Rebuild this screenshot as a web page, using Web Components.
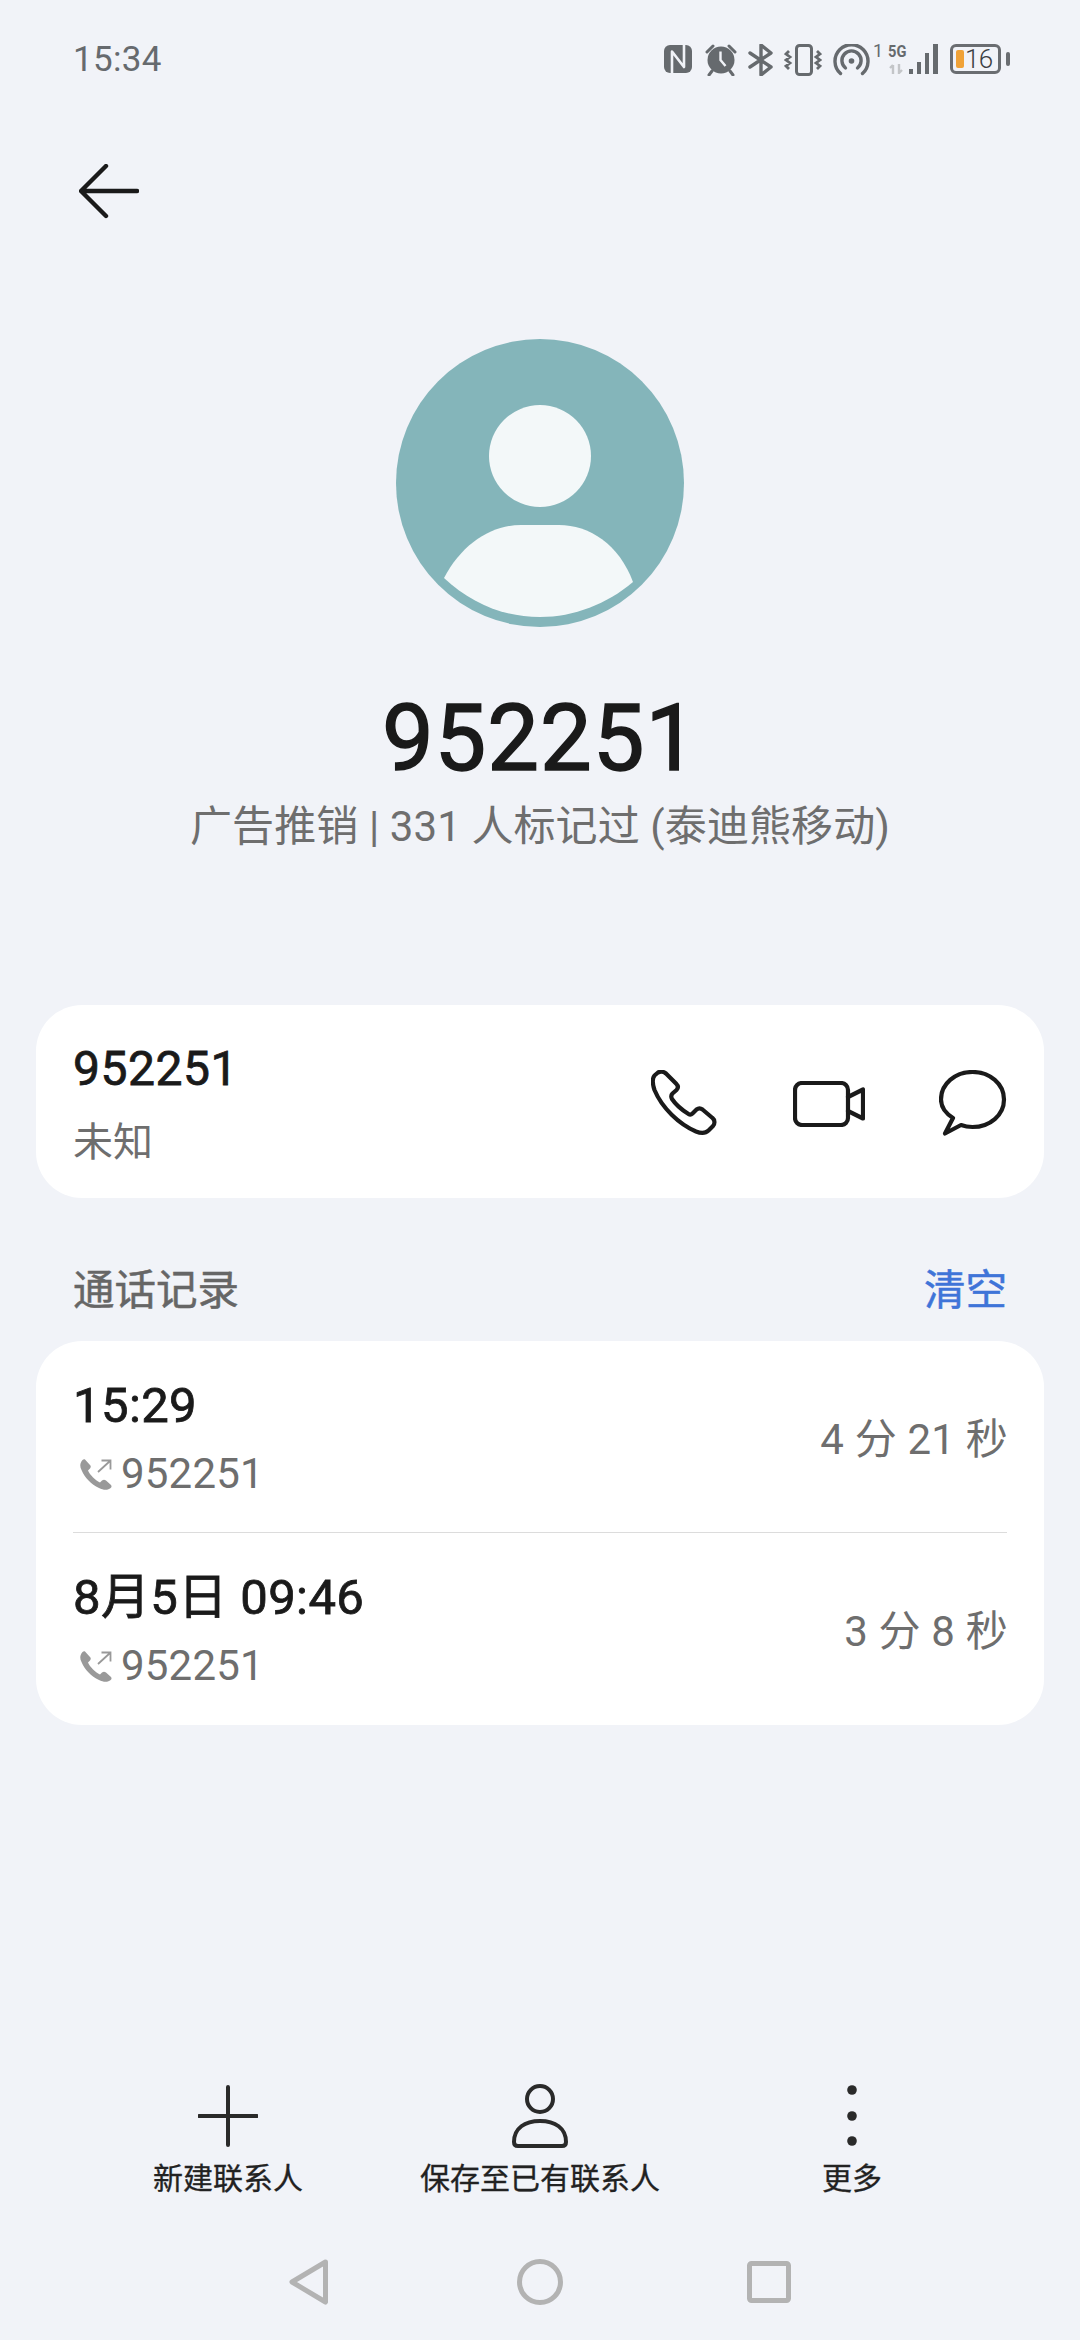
<!DOCTYPE html>
<html lang="zh"><head><meta charset="utf-8"><title>952251</title>
<style>
html,body{margin:0;padding:0;background:#f1f3f8}
body{font-family:Roboto,"Noto Sans CJK SC",sans-serif;width:1080px;height:2340px;overflow:hidden}
</style></head><body>
<contact-page>
  <status-bar slot="status"></status-bar>
  <back-row slot="back"></back-row>
  <profile-head slot="profile" number="952251" note="广告推销 | 331 人标记过 (泰迪熊移动)"></profile-head>
  <contact-card slot="contact" number="952251" label="未知"></contact-card>
  <section-head slot="section" title="通话记录" action="清空"></section-head>
  <call-card slot="calls">
    <call-row time="15:29" number="952251" dur="4 分 21 秒"></call-row>
    <call-row time="8月5日 09:46" number="952251" dur="3 分 8 秒" last></call-row>
  </call-card>
  <action-bar slot="actions"></action-bar>
  <nav-bar slot="nav"></nav-bar>
</contact-page>
<script>
function def(name, html){
  customElements.define(name, class extends HTMLElement{
    connectedCallback(){
      if(this.shadowRoot) return;
      const r=this.attachShadow({mode:'open'});
      r.innerHTML = typeof html==='function'? html(this): html;
    }
  });
}
const FONT='Roboto,"Noto Sans CJK SC",sans-serif';
def('contact-page',`<style>:host{display:flex;flex-direction:column;width:1080px;height:2340px;font-family:${FONT}}
.sp{flex:1}</style>
<slot name="status"></slot><slot name="back"></slot><slot name="profile"></slot><slot name="contact"></slot><slot name="section"></slot><slot name="calls"></slot><div class="sp"></div><slot name="actions"></slot><slot name="nav"></slot>`);

def('status-bar',`<style>:host{display:flex;align-items:flex-start;height:118px;box-sizing:border-box;padding:44px 70px 0 73px;color:#666a6e}
.t{font-size:35px;line-height:30px;letter-spacing:.3px;width:100px;padding-top:1px}
.ic{margin-left:auto;display:flex;align-items:flex-start;height:32px}
svg{display:block}
.one{font-size:18px;line-height:14px;width:18px;padding-left:3px;margin-top:0;box-sizing:border-box;color:#666a6e}
.g{display:flex;flex-direction:column;width:21px}
.g span{font-size:17px;line-height:14px;font-weight:700;display:block;height:20px;transform:scaleX(.86);transform-origin:top left;white-space:nowrap}
.bat{box-sizing:border-box;width:51px;height:30px;border:3px solid #6a6d71;border-radius:6px;display:flex;align-items:center;padding-left:3px;margin-left:12px}
.bat i{display:block;flex:none;width:8px;height:18px;background:#f0a237;border-radius:2px}
.bat b{font-weight:300;font-size:26px;line-height:24px;color:#3c3f43;margin-left:1px;letter-spacing:-.6px}
.nub{width:4px;height:14px;background:#6a6d71;border-radius:2px;margin:8px 0 0 5px}
</style>
<div class="t">15:34</div>
<div class="ic">
<svg width="28" height="30" viewBox="0 0 28 30" style="margin-top:1px"><rect width="28" height="28" rx="6" fill="#666a6e"/><path d="M8 28V6.500L20 22V0" fill="none" stroke="#f1f3f8" stroke-width="2.600" stroke-linejoin="round"/></svg>
<svg width="32" height="32" viewBox="0 0 32 32" style="margin-left:13px"><path d="M2 8l6-6M30 8l-6-6M7 27l-3 4M25 27l3 4" stroke="#666a6e" stroke-width="3" stroke-linecap="round"/><circle cx="16" cy="16" r="13.500" fill="#666a6e"/><path d="M15.500 7.500V16l5 6" stroke="#f1f3f8" stroke-width="2.400" fill="none"/></svg>
<svg width="26" height="32" viewBox="0 0 26 32" style="margin-left:11px"><path d="M2 9l21 14-10 8V1l10 8L2 23" fill="none" stroke="#666a6e" stroke-width="3.400" stroke-linejoin="round" stroke-linecap="round"/></svg>
<svg width="38" height="32" viewBox="0 0 38 32" style="margin-left:10px"><rect x="12.500" y="1.500" width="15" height="29" rx="3" fill="none" stroke="#666a6e" stroke-width="3"/><path d="M5 7L2 10l4 3-4 3 4 3-4 3 3 3M33 7l3 3-4 3 4 3-4 3 4 3-3 3" fill="none" stroke="#666a6e" stroke-width="2.800"/></svg>
<svg width="37" height="32" viewBox="0 0 37 32" style="margin-left:11px"><path d="M7.500 29.500A16.500 16.500 0 1 1 29.500 29.500" fill="none" stroke="#666a6e" stroke-width="3.400" stroke-linecap="round"/><path d="M12.500 24A9.600 9.600 0 1 1 24.500 24" fill="none" stroke="#666a6e" stroke-width="3.400" stroke-linecap="round"/><circle cx="18.500" cy="17" r="2.800" fill="#666a6e"/></svg>
<span class="one">1</span>
<div class="g"><span>5G</span><svg width="17" height="10" viewBox="0 0 17 10"><path d="M5 10V1M2 4l3-3M11 0v9l3-3" fill="none" stroke="#c3c5c8" stroke-width="2.400"/></svg></div>
<svg width="29" height="30" viewBox="0 0 29 30"><path d="M0 25h4v5H0zM8 18h4v12H8zM16 9h4v21h-4zM24 0h5v30h-5z" fill="#666a6e"/></svg>
<div class="bat"><i></i><b>16</b></div><div class="nub"></div>
</div>`);

def('back-row',`<style>:host{display:flex;align-items:center;height:147px;padding-left:79px}svg{display:block}</style>
<svg width="60" height="56" viewBox="0 0 60 56"><path d="M27 2L2 27l25 25M3 27h55" fill="none" stroke="#1a1a1a" stroke-width="4.400" stroke-linecap="round" stroke-linejoin="round"/></svg>`);

def('profile-head',h=>`<style>:host{display:flex;flex-direction:column;align-items:center;margin-top:74px;height:666px}
svg{display:block}
.n{font-size:92px;line-height:100px;font-weight:400;-webkit-text-stroke:1.500px #1a1a1a;color:#1a1a1a;margin-top:62px;letter-spacing:1px}
.s{font-size:42px;line-height:60px;color:#6e6e6e;margin-top:8px;letter-spacing:.1px}</style>
<svg width="288" height="288" viewBox="0 0 288 288"><circle cx="144" cy="144" r="144" fill="#84b5ba"/><circle cx="144" cy="117" r="51" fill="#f3f8f9"/><path d="M48 239C66 205 95 186 125 186H163C193 186 223 205 237 243C211 265 178 278 144 278C107 278 75 264 48 239Z" fill="#f3f8f9"/></svg>
<div class="n">${h.getAttribute('number')}</div><div class="s">${h.getAttribute('note')}</div>`);

def('contact-card',h=>`<style>:host{display:flex;align-items:flex-start;box-sizing:border-box;margin:0 36px;height:193px;background:#fff;border-radius:46px;padding:27px 37px 0 37px}
.t{flex:1}
.a{font-size:48px;line-height:73px;font-weight:400;-webkit-text-stroke:.8px #1a1a1a;color:#1a1a1a;letter-spacing:.5px}
.b{font-size:40px;line-height:73px;color:#6e6e6e;padding-top:1px}
svg{display:block;fill:none;stroke:#1a1a1a;stroke-width:4.200;stroke-linejoin:round;stroke-linecap:round}
.i{display:flex;margin-top:38px}</style>
<div class="t"><div class="a">${h.getAttribute('number')}</div><div class="b">${h.getAttribute('label')}</div></div>
<div class="i">
<svg width="66" height="66" viewBox="0 0 66 66"><path d="M7 2.500C10 1 12.500 1.500 15 3.500L25 13.500C27.500 16 27.500 18 25.500 20L21.500 23.500C20 25 20 27 21 29C25 35 31 40 37.500 44C39 45 40.500 44.500 41.500 43.500L45.500 39.500C47.500 38 49.500 38 51.500 39.500L61.500 48C64 50 64 54 62 56L57.500 60.500C54 64 50 63.500 45 61.500C28 54 11 38 3.500 20C1.500 14 1.500 8 3.500 5.500Z"/></svg>
<svg width="72" height="46" viewBox="0 0 72 46" style="margin:11px 0 0 76px"><rect x="2" y="2" width="53" height="42" rx="7"/><path d="M55 16L70 8.500V37.500L55 30"/></svg>
<svg width="68" height="66" viewBox="0 0 68 66" style="margin-left:74px"><path d="M14 48C6 43 2 36 2 29.500C2 14 16 2 33.500 2S65 14 65 29.500S51 57 33.500 57C29 57 25.500 56.300 22 55L6 63.500Z"/></svg>
</div>`);

def('section-head',h=>`<style>:host{display:flex;justify-content:space-between;align-items:flex-end;height:143px;box-sizing:border-box;padding:0 73px 22px;font-size:41.500px;line-height:56px;font-weight:400;-webkit-text-stroke:.5px currentColor}
.t{color:#666}.a{color:#3f74d8}</style><div class="t">${h.getAttribute('title')}</div><div class="a">${h.getAttribute('action')}</div>`);

def('call-card',`<style>:host{display:block;margin:0 36px;background:#fff;border-radius:46px;overflow:hidden}</style><slot></slot>`);

def('call-row',h=>`<style>:host{display:block;padding:0 37px}
.r{display:flex;align-items:center;justify-content:space-between;box-sizing:border-box;height:192px;${h.hasAttribute('last')?'':'border-bottom:1px solid #dcdcdc;'}}
.m{padding-top:6px}
.a{font-size:49px;line-height:68px;font-weight:400;-webkit-text-stroke:.8px #1a1a1a;color:#1a1a1a;letter-spacing:.4px}
.b{display:flex;align-items:center;font-size:42px;line-height:68px;color:#6e6e6e;letter-spacing:.2px}
svg{display:block;margin:0 9px 0 7px}
.d{font-size:42px;color:#6e6e6e;letter-spacing:.2px;margin:-3px -1px 0 0}</style>
<div class="r"><div class="m"><div class="a">${h.getAttribute('time')}</div><div class="b"><svg width="32" height="32" viewBox="0 0 32 32"><path d="M5 1.500L10 7C11 8 11 9 10 10.500L8 12.500C10 17 15 22 20 24.500L22 22.500C23.500 21.500 24.500 21.500 26 22.500L31 27C32 28.500 31.500 29.500 30 30.500C27 32.500 23 32 19 30C11 26 5 20 1.500 12C-.5 8 0 5 2.500 2C3.500 1 4.300 .9 5 1.500Z" fill="#999"/><path d="M18 14L30 3M21.500 2.500H30.500V11.500" fill="none" stroke="#999" stroke-width="1.800"/></svg>${h.getAttribute('number')}</div></div>
<div class="d">${h.getAttribute('dur')}</div></div>`);

def('action-bar',`<style>:host{display:grid;grid-template-columns:repeat(3,312px);padding:0 72px;color:#222;font-size:30px;line-height:40px;font-weight:400;-webkit-text-stroke:.3px #222}
.c{display:flex;flex-direction:column;align-items:center}
svg{display:block;height:64px;margin-bottom:11px}</style>
<div class="c"><svg width="60" height="64" viewBox="0 0 60 64"><path d="M30 3V61M1 32H59" stroke="#2a2a2a" stroke-width="4" fill="none" stroke-linecap="round"/></svg>新建联系人</div>
<div class="c"><svg width="60" height="64" viewBox="0 0 60 64"><circle cx="30" cy="15" r="13" fill="none" stroke="#2a2a2a" stroke-width="4"/><path d="M4 58C4 44 15 37 30 37S56 44 56 58C56 60.500 55 62 52 62H8C5 62 4 60.500 4 58Z" fill="none" stroke="#2a2a2a" stroke-width="4"/></svg>保存至已有联系人</div>
<div class="c"><svg width="12" height="64" viewBox="0 0 12 64"><circle cx="6" cy="6" r="4.800" fill="#2a2a2a"/><circle cx="6" cy="32" r="4.800" fill="#2a2a2a"/><circle cx="6" cy="57" r="4.800" fill="#2a2a2a"/></svg>更多</div>`);

def('nav-bar',`<style>:host{display:flex;align-items:center;height:46px;padding:60px 0 35px 289px}svg{display:block;fill:none;stroke:#b3b3b3;stroke-width:5}</style>
<svg width="39" height="46" viewBox="0 0 39 46"><path d="M36.500 3L3 23L36.500 43Z" stroke-linejoin="round"/></svg>
<svg width="46" height="46" viewBox="0 0 46 46" style="margin-left:189px"><circle cx="23" cy="23" r="20.500"/></svg>
<svg width="44" height="42" viewBox="0 0 44 42" style="margin-left:184px"><rect x="2.500" y="2.500" width="39" height="37" rx="2"/></svg>`);
</script>
</body></html>
